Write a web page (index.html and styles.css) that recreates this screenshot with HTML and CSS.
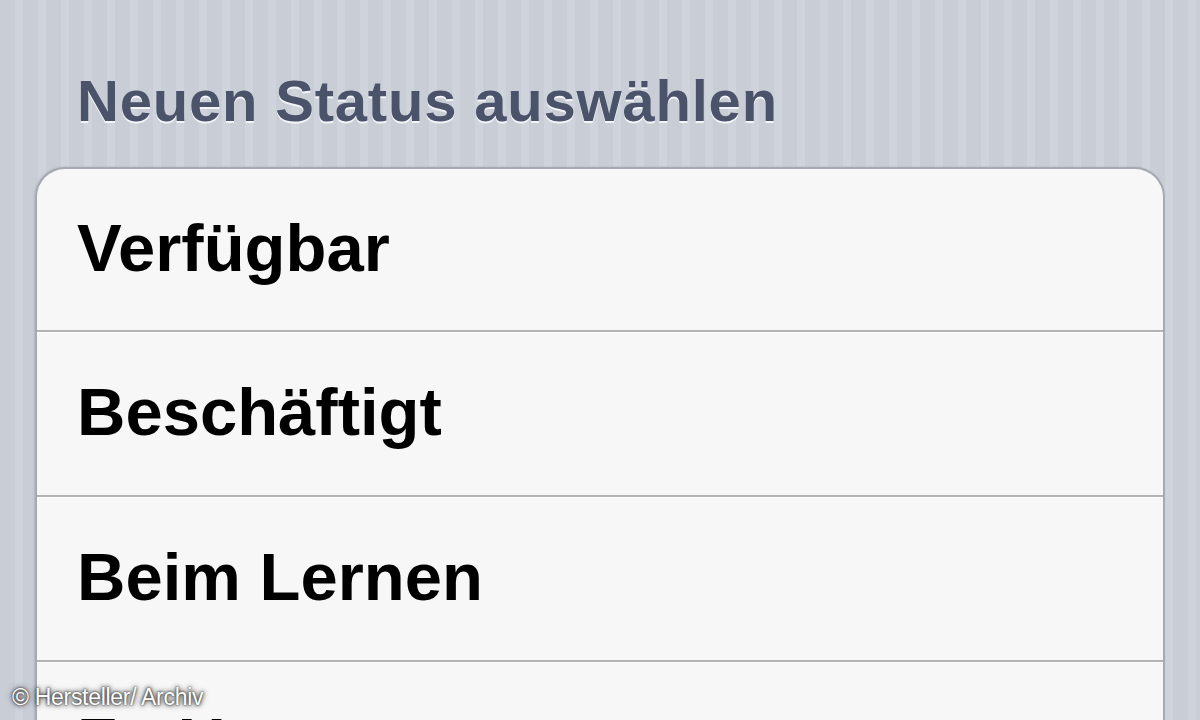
FILE: index.html
```html
<!DOCTYPE html>
<html lang="de">
<head>
<meta charset="utf-8">
<title>Neuen Status auswählen</title>
<link rel="stylesheet" href="styles.css">
</head>
<body>
<main class="screen">
  <h1 class="section-title">Neuen Status auswählen</h1>
  <ul class="group">
    <li class="row">Verfügbar</li>
    <li class="row">Beschäftigt</li>
    <li class="row">Beim Lernen</li>
    <li class="row">Zu Hause</li>
  </ul>
</main>
<div class="credit">© Hersteller/ Archiv</div>
</body>
</html>
```

FILE: styles.css
```css
html, body {
  margin: 0;
  padding: 0;
  height: 100%;
  overflow: hidden;
}
body {
  background: repeating-linear-gradient(90deg, #c9cdd5 0 15px, #cfd3db 15px 23px);
  font-family: "Liberation Sans", Arial, sans-serif;
  position: relative;
}
.screen {
  display: flex;
  flex-direction: column;
  padding: 0 35px;
}
.section-title {
  margin: 0 0 36px 0;
  padding: 71px 0 0 42px;
  font-size: 58px;
  line-height: 60px;
  font-weight: bold;
  color: #4b536b;
  text-shadow: 0 2px 0 #f2f4f7;
  letter-spacing: 0.8px;
}
.group {
  list-style: none;
  margin: 0;
  padding: 0;
  background: #f7f7f7;
  border: 2px solid #a6a9b0;
  border-bottom: none;
  border-radius: 30px 30px 0 0;
  box-shadow: -1px 0 2px rgba(120,125,135,0.25);
  width: 1130px;
  box-sizing: border-box;
}
.row {
  height: 159px;
  border-bottom: 2px solid #b3b3b3;
  box-shadow: 0 1px 0 #ffffff;
  display: flex;
  align-items: center;
  padding: 0 0 4px 40px;
  font-size: 67px;
  font-weight: bold;
  color: #000;
  letter-spacing: 0;
}
.row:first-child {
  height: 157px;
}
.credit {
  position: absolute;
  left: 12px;
  top: 684px;
  font-family: "Liberation Sans", Arial, sans-serif;
  font-size: 23px;
  color: #ffffff;
  text-shadow: 0 0 2px #222, 0 0 4px #444, 0 0 6px #666;
  letter-spacing: -0.3px;
}
```
